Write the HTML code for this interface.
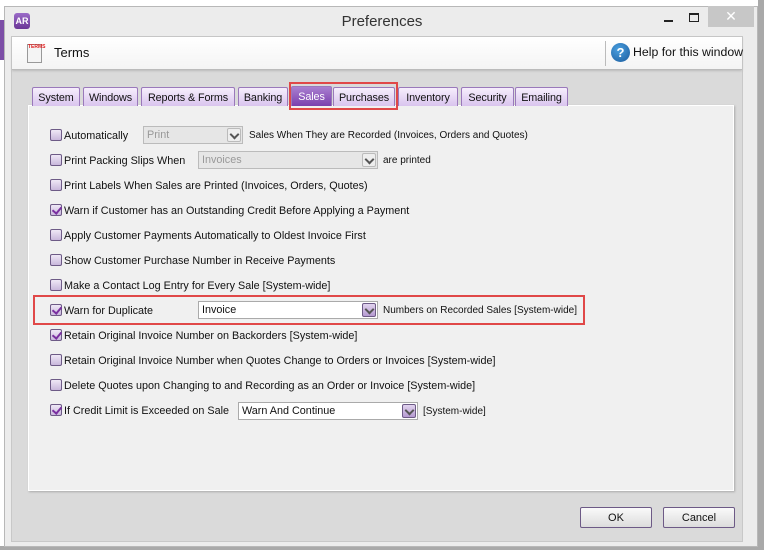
<!DOCTYPE html>
<html><head><style>
*{margin:0;padding:0;box-sizing:border-box}
body{width:764px;height:550px;overflow:hidden;background:#fff;font-family:"Liberation Sans",sans-serif;font-size:11px;color:#111;position:relative}
.abs{position:absolute}
.win{left:4px;top:6px;width:754px;height:541px;background:#ececec;border:1px solid #b8b8b8}
.inner{left:11px;top:36px;width:732px;height:506px;background:#dadada;border:1px solid #c8c8c8}
.tb{left:12px;top:37px;width:730px;height:33px;background:linear-gradient(#fff,#f4f4f4);border-bottom:1px solid #bbb;box-shadow:0 1px 2px #bbb}
.tab{position:absolute;top:87px;height:19px;background:linear-gradient(#f6eefc,#d9c4ee);border:1px solid #9a79bb;border-bottom:none;border-radius:2px 2px 0 0;text-align:center;line-height:20px;font-size:10.8px;letter-spacing:-0.1px}
.tab.sel{background:linear-gradient(#a97fd0,#7a3fae);color:#fff;top:86px;height:20px;line-height:21px}
.panel{left:28px;top:105px;width:706px;height:386px;background:#f0f0f0;border:1px solid #fff;box-shadow:1px 1px 2px #aaa}
.row{position:absolute;left:50px;height:14px;line-height:14px;font-size:10.8px;white-space:nowrap}
.cb{display:inline-block;width:12px;height:12px;border:1px solid #6d5a86;border-radius:2px;background:linear-gradient(#efe8f6,#c9b8dc);vertical-align:-2px;margin-right:2px;position:relative}
.cb.on::after{content:"";position:absolute;left:3px;top:0px;width:4px;height:7px;border-right:2px solid #7a2fa0;border-bottom:2px solid #7a2fa0;transform:rotate(40deg)}
.dd{position:absolute;height:18px;border:1px solid #aaa;background:#fff;font-size:10.8px;line-height:16px;padding-left:3px}
.dd.dis{background:#e6e6e6;color:#999;border-color:#bbb}
.dd .ar{position:absolute;right:1px;top:1px;width:14px;height:14px;border:1px solid #6d5a86;background:linear-gradient(#e2d4ef,#b59ad0);border-radius:2px}
.dd.dis .ar{border-color:#bbb;background:#eee}
.dd .ar::after{content:"";position:absolute;left:3px;top:2px;width:5px;height:5px;border-right:2px solid #555;border-bottom:2px solid #555;transform:rotate(45deg)}
.lbl{position:absolute;font-size:10px;line-height:14px;white-space:nowrap}
.btn{position:absolute;top:507px;width:72px;height:21px;border:1px solid #6d5a86;border-radius:2px;background:linear-gradient(#fafafa,#dcdcdc);text-align:center;line-height:20px;font-size:11px}
.red{position:absolute;border:2px solid #e04848}
</style></head><body>
<div class="abs" style="left:0;top:20px;width:4px;height:40px;background:#7d4fa7"></div>
<div class="abs" style="left:0;top:0;width:764px;height:6px;background:#fff"></div>
<div class="abs" style="left:758px;top:0;width:6px;height:550px;background:#a9a9a9"></div>
<div class="abs" style="left:0;top:546px;width:764px;height:4px;background:#a9a9a9"></div>
<div class="abs win"></div>
<div class="abs" style="left:14px;top:13px;width:16px;height:16px;background:linear-gradient(#9a6bc8,#6a3596);border-radius:3px;color:#fff;font-size:9px;font-weight:bold;line-height:16px;text-align:center">AR</div>
<div class="abs" style="left:0;top:13px;width:764px;text-align:center;font-size:15px;color:#333">Preferences</div>
<div class="abs" style="left:664px;top:20px;width:9px;height:2px;background:#222"></div>
<div class="abs" style="left:689px;top:13px;width:10px;height:9px;border:1px solid #222;border-top-width:2px"></div>
<div class="abs" style="left:708px;top:6px;width:46px;height:21px;background:#c7c7c7;color:#fff;text-align:center;font-size:14px;line-height:20px">✕</div>
<div class="abs inner"></div>
<div class="abs tb"></div>
<div class="abs" style="left:27px;top:44px;width:15px;height:19px;background:#f4f4f4;border:1px solid #999"></div>
<div class="abs" style="left:28px;top:44px;font-size:5px;color:#e02020;font-weight:bold">TERMS</div>
<div class="abs" style="left:54px;top:45px;font-size:13px">Terms</div>
<div class="abs" style="left:605px;top:41px;width:1px;height:25px;background:#bbb"></div>
<div class="abs" style="left:611px;top:43px;width:19px;height:19px;border-radius:50%;background:radial-gradient(circle at 40% 35%,#4aa0e0,#1a5a9c);color:#fff;font-weight:bold;font-size:13px;text-align:center;line-height:19px">?</div>
<div class="abs" style="left:633px;top:45px;font-size:12.3px">Help for this window</div>
<div class="abs panel"></div>
<div class="tab" style="left:32px;width:48px">System</div>
<div class="tab" style="left:83px;width:55px">Windows</div>
<div class="tab" style="left:141px;width:94px">Reports &amp; Forms</div>
<div class="tab" style="left:238px;width:50px">Banking</div>
<div class="tab sel" style="left:291px;width:41px">Sales</div>
<div class="tab" style="left:333px;width:62px">Purchases</div>
<div class="tab" style="left:398px;width:60px">Inventory</div>
<div class="tab" style="left:461px;width:53px">Security</div>
<div class="tab" style="left:515px;width:53px">Emailing</div>
<div class="red" style="left:289px;top:82px;width:109px;height:28px"></div>

<div class="row" style="top:129px"><span class="cb"></span>Automatically</div>
<div class="dd dis" style="left:143px;top:126px;width:100px">Print<span class="ar"></span></div>
<div class="lbl" style="left:249px;top:129px">Sales When They are Recorded (Invoices, Orders and Quotes)</div>
<div class="row" style="top:154px"><span class="cb"></span>Print Packing Slips When</div>
<div class="dd dis" style="left:198px;top:151px;width:180px">Invoices<span class="ar"></span></div>
<div class="lbl" style="left:383px;top:154px">are printed</div>
<div class="row" style="top:179px"><span class="cb"></span>Print Labels When Sales are Printed (Invoices, Orders, Quotes)</div>
<div class="row" style="top:204px"><span class="cb on"></span>Warn if Customer has an Outstanding Credit Before Applying a Payment</div>
<div class="row" style="top:229px"><span class="cb"></span>Apply Customer Payments Automatically to Oldest Invoice First</div>
<div class="row" style="top:254px"><span class="cb"></span>Show Customer Purchase Number in Receive Payments</div>
<div class="row" style="top:279px"><span class="cb"></span>Make a Contact Log Entry for Every Sale [System-wide]</div>
<div class="row" style="top:304px"><span class="cb on"></span>Warn for Duplicate</div>
<div class="dd" style="left:198px;top:301px;width:180px">Invoice<span class="ar"></span></div>
<div class="lbl" style="left:383px;top:304px">Numbers on Recorded Sales [System-wide]</div>
<div class="red" style="left:33px;top:295px;width:552px;height:30px"></div>
<div class="row" style="top:329px"><span class="cb on"></span>Retain Original Invoice Number on Backorders [System-wide]</div>
<div class="row" style="top:354px"><span class="cb"></span>Retain Original Invoice Number when Quotes Change to Orders or Invoices [System-wide]</div>
<div class="row" style="top:379px"><span class="cb"></span>Delete Quotes upon Changing to and Recording as an Order or Invoice [System-wide]</div>
<div class="row" style="top:404px"><span class="cb on"></span>If Credit Limit is Exceeded on Sale</div>
<div class="dd" style="left:238px;top:402px;width:180px">Warn And Continue<span class="ar"></span></div>
<div class="lbl" style="left:423px;top:405px">[System-wide]</div>

<div class="btn" style="left:580px">OK</div>
<div class="btn" style="left:663px">Cancel</div>
</body></html>
